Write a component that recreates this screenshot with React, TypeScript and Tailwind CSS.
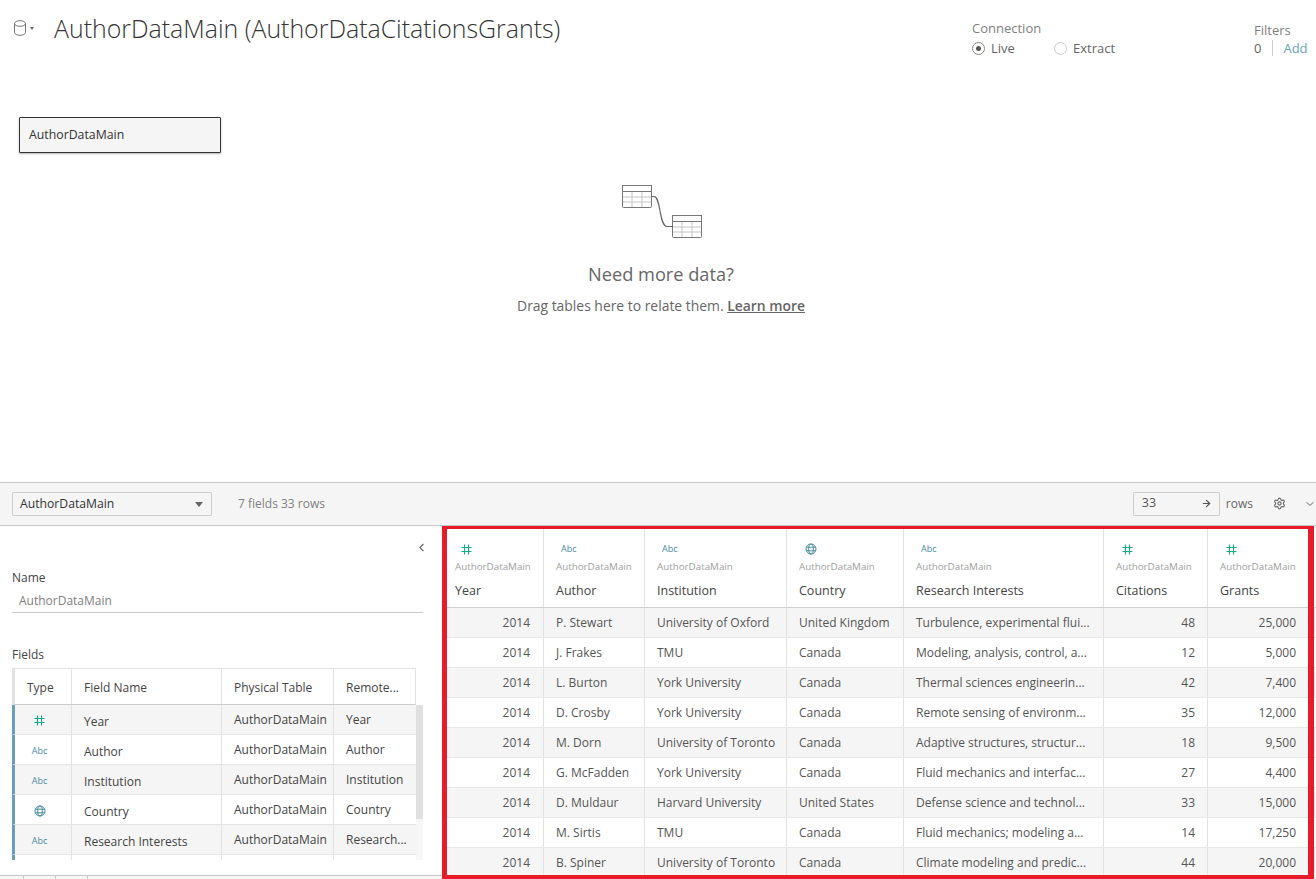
import { ArrowRight, ChevronDown, ChevronLeft, Settings } from "lucide-react";

const font = "font-['Open_Sans','Liberation_Sans',sans-serif]";

type FieldType = "num" | "abc" | "geo";

const columns: { name: string; type: FieldType; width: string; right?: boolean }[] = [
  { name: "Year", type: "num", width: "w-[97px]", right: true },
  { name: "Author", type: "abc", width: "w-[101px]" },
  { name: "Institution", type: "abc", width: "w-[142px]" },
  { name: "Country", type: "geo", width: "w-[117px]" },
  { name: "Research Interests", type: "abc", width: "w-[200px]" },
  { name: "Citations", type: "num", width: "w-[104px]", right: true },
  { name: "Grants", type: "num", width: "w-[100px]", right: true },
];

const rows = [
  ["2014", "P. Stewart", "University of Oxford", "United Kingdom", "Turbulence, experimental flui...", "48", "25,000"],
  ["2014", "J. Frakes", "TMU", "Canada", "Modeling, analysis, control, a...", "12", "5,000"],
  ["2014", "L. Burton", "York University", "Canada", "Thermal sciences engineerin...", "42", "7,400"],
  ["2014", "D. Crosby", "York University", "Canada", "Remote sensing of environm...", "35", "12,000"],
  ["2014", "M. Dorn", "University of Toronto", "Canada", "Adaptive structures, structur...", "18", "9,500"],
  ["2014", "G. McFadden", "York University", "Canada", "Fluid mechanics and interfac...", "27", "4,400"],
  ["2014", "D. Muldaur", "Harvard University", "United States", "Defense science and technol...", "33", "15,000"],
  ["2014", "M. Sirtis", "TMU", "Canada", "Fluid mechanics; modeling a...", "14", "17,250"],
  ["2014", "B. Spiner", "University of Toronto", "Canada", "Climate modeling and predic...", "44", "20,000"],
];

const fields: { type: FieldType; name: string; remote: string }[] = [
  { type: "num", name: "Year", remote: "Year" },
  { type: "abc", name: "Author", remote: "Author" },
  { type: "abc", name: "Institution", remote: "Institution" },
  { type: "geo", name: "Country", remote: "Country" },
  { type: "abc", name: "Research Interests", remote: "Research..." },
];

function HashIcon() {
  return (
    <svg width="11" height="11" viewBox="0 0 11 11" fill="none" stroke="#12a98e" strokeWidth="1.1">
      <path d="M3.5 0.5v10M7.5 0.5v10M0.5 3.5h10M0.5 7.5h10" />
    </svg>
  );
}

function GlobeIcon() {
  return (
    <svg width="12" height="12" viewBox="0 0 12 12" fill="none" stroke="#4a8aa5" strokeWidth="1">
      <circle cx="6" cy="6" r="5" />
      <ellipse cx="6" cy="6" rx="2.3" ry="5" />
      <path d="M1.2 4.2h9.6M1.2 7.8h9.6" />
    </svg>
  );
}

function TypeIcon({ type }: { type: FieldType }) {
  if (type === "num") return <HashIcon />;
  if (type === "geo") return <GlobeIcon />;
  return <span className="text-[9px] leading-[12px] text-[#4a8aa5]">Abc</span>;
}

function TableGlyph() {
  return (
    <svg width="30" height="24" viewBox="0 0 30 24" fill="none">
      <rect x="0.5" y="0.5" width="29" height="22" rx="1" fill="#fff" stroke="#777" />
      <rect x="0.5" y="0.5" width="29" height="6" fill="#fff" stroke="#777" />
      <path d="M10 7v15M20 7v15M1 12h28M1 17h28" stroke="#c4c4c4" />
    </svg>
  );
}

function Header() {
  return (
    <div className="flex items-start justify-between">
      <div className="flex items-center pl-[14px] pt-[13px]">
        <svg width="12" height="16" viewBox="0 0 12 16" fill="none" stroke="#777" strokeWidth="1">
          <path d="M0.5 3.5v9c0 1.5 2.4 2.8 5.5 2.8s5.5-1.3 5.5-2.8v-9" />
          <ellipse cx="6" cy="3.5" rx="5.5" ry="2.8" />
        </svg>
        <div className="ml-[4px] h-0 w-0 border-x-[2px] border-t-[3px] border-x-transparent border-t-[#666]" />
        <h1 className="ml-[20px] text-[24.9px] leading-[30px] font-light text-[#333]">
          AuthorDataMain (AuthorDataCitationsGrants)
        </h1>
      </div>
      <div className="flex">
        <div className="w-[282px] pt-[20px] text-[13px] text-[#666]">
          <div className="leading-[17px] text-[#808080]">Connection</div>
          <div className="mt-[2px] flex items-center leading-[18px]">
            <span className="flex h-[13px] w-[13px] items-center justify-center rounded-full border border-[#888]">
              <span className="h-[5px] w-[5px] rounded-full bg-[#555]" />
            </span>
            <span className="ml-[6px] w-[63px]">Live</span>
            <span className="h-[13px] w-[13px] rounded-full border border-[#ccc]" />
            <span className="ml-[6px]">Extract</span>
          </div>
        </div>
        <div className="w-[62px] pt-[22px] text-[13px]">
          <div className="leading-[17px] text-[#808080]">Filters</div>
          <div className="flex items-center leading-[18px]">
            <span className="text-[#666]">0</span>
            <span className="ml-[11px] h-[16px] w-px bg-[#ccc]" />
            <span className="ml-[10px] text-[#6aa3b8]">Add</span>
          </div>
        </div>
      </div>
    </div>
  );
}

function Canvas() {
  return (
    <section className="h-[483px] border-b border-[#c8c8c8] bg-white">
      <Header />
      <div className="ml-[19px] mt-[60px] flex h-[36px] w-[202px] items-center rounded-[1px] border border-[#333] bg-[#f5f5f5] pl-[9px] text-[12.3px] font-medium text-[#333] shadow-[0_1px_2px_rgba(0,0,0,0.3)]">
        AuthorDataMain
      </div>
      <div className="mt-[32px] flex flex-col items-center pl-[6px]">
        <div className="relative ml-[2px] h-[54px] w-[80px]">
          <TableGlyph />
          <div className="absolute bottom-0 right-0 h-[24px]">
            <TableGlyph />
          </div>
          <svg className="absolute left-[29px] top-[11px]" width="24" height="32" viewBox="0 0 24 32" fill="none" stroke="#666" strokeWidth="1.2">
            <path d="M0 0.5h3c7 0 5 30 13 30h6" />
          </svg>
        </div>
        <div className="mt-[23px] text-[18.2px] leading-[24px] text-[#666]">Need more data?</div>
        <div className="mt-[10px] text-[13.9px] leading-[20px] text-[#666]">
          Drag tables here to relate them. <span className="font-semibold underline">Learn more</span>
        </div>
      </div>
    </section>
  );
}

function Toolbar() {
  return (
    <div className="flex h-[43px] items-center border-b border-[#c8c8c8] bg-[#f5f5f5] pb-px pl-[12px]">
      <div className="flex h-[24px] w-[200px] items-center justify-between rounded-[1px] border border-[#ccc] bg-[#f5f5f5] pl-[7px] pr-[8px] pt-px text-[12.2px] text-[#333]">
        AuthorDataMain
        <span className="h-0 w-0 border-x-[4px] border-t-[5px] border-x-transparent border-t-[#666]" />
      </div>
      <span className="ml-[26px] text-[12px] text-[#808080]">7 fields 33 rows</span>
      <div className="ml-auto flex items-center">
        <div className="flex h-[24px] w-[87px] items-center justify-between rounded-[1px] border border-[#ccc] pl-[8px] pr-[7px] text-[12.5px] text-[#555]">
          33
          <ArrowRight size={11} color="#555" strokeWidth={2.5} />
        </div>
        <span className="ml-[6px] text-[12px] text-[#666]">rows</span>
        <Settings size={13} color="#666" className="ml-[20px]" />
        <ChevronDown size={12} color="#555" className="ml-[18px]" strokeWidth={1.8} />
      </div>
    </div>
  );
}

function FieldsPanel() {
  return (
    <div className="relative w-[442px] shrink-0 bg-white pl-[12px]">
      <div className="absolute right-[14px] top-[15px]">
        <ChevronLeft size={13} color="#666" />
      </div>
      <div className="pt-[43px] text-[12px] leading-[17px] text-[#444]">Name</div>
      <div className="mt-[7px] h-[20px] w-[411px] border-b border-[#ccc] pl-[7px] text-[12px] leading-[16px] text-[#808080]">
        AuthorDataMain
      </div>
      <div className="mt-[33px] text-[12px] leading-[17px] text-[#444]">Fields</div>
      <div className="mt-[5px] flex h-[192px] w-[411px] items-start overflow-hidden">
        <div className="w-[404px] shrink-0 text-[12px] text-[#444]">
          <div className="flex h-[37px] border-y border-r border-[#e2e2e2] border-b-[#ccc] border-l-[3px] border-l-[#e2e2e2] leading-[37px]">
            <div className="w-[57px] border-r border-[#e2e2e2] pl-[12px]">Type</div>
            <div className="w-[150px] border-r border-[#e2e2e2] pl-[12px]">Field Name</div>
            <div className="w-[112px] border-r border-[#e2e2e2] pl-[12px]">Physical Table</div>
            <div className="pl-[12px]">Remote...</div>
          </div>
          {fields.map((f, i) => (
            <div key={f.name} className={`flex h-[30px] border-b border-[#e4e4e4] border-l-[3px] border-l-[#6a9fb8] ${i % 2 === 0 ? "bg-[#f5f5f5]" : "bg-white"}`}>
              <div className="flex w-[57px] items-center justify-center border-r border-[#e2e2e2] pr-[7px] pt-[2px]">
                <TypeIcon type={f.type} />
              </div>
              <div className="flex w-[150px] items-center border-r border-[#e2e2e2] pl-[12px] pt-[5px]">{f.name}</div>
              <div className="flex w-[112px] items-center border-r border-[#e2e2e2] pl-[12px]">AuthorDataMain</div>
              <div className="flex items-center pl-[12px]">{f.remote}</div>
            </div>
          ))}
          <div className="flex h-[10px] border-l-[3px] border-l-[#6a9fb8]">
            <div className="w-[57px] border-r border-[#e2e2e2]" />
            <div className="w-[150px] border-r border-[#e2e2e2]" />
            <div className="w-[112px] border-r border-[#e2e2e2]" />
          </div>
        </div>
        <div className="mt-[37px] h-[155px] w-[7px] bg-[#f7f7f7]">
          <div className="h-[114px] bg-[#e0e0e0]" />
        </div>
      </div>
      <div className="absolute bottom-0 left-0 flex h-[4px] w-full border-t border-[#c8c8c8] bg-[#f5f5f5]">
        <div className="w-[24px] border-r border-[#c8c8c8]" />
        <div className="w-[32px] border-r border-[#c8c8c8]" />
        <div className="w-[32px] border-r border-[#c8c8c8]" />
      </div>
    </div>
  );
}

function DataGrid() {
  return (
    <div className="relative flex-1 overflow-hidden bg-white pl-[5px] pt-[3px]">
      <div className="flex h-[79px] border-b border-[#d0d0d0]">
        {columns.map((c, j) => (
          <div key={c.name} className={`${c.width} shrink-0 border-r border-[#e2e2e2] last:border-r-0 ${j === 0 ? "pl-[8px]" : "pl-[12px]"}`}>
            <div className={`mt-[13px] flex h-[14px] items-center ${c.type === "abc" ? "pl-[5px]" : "pl-[6px]"}`}>
              <TypeIcon type={c.type} />
            </div>
            <div className="mt-[4px] text-[9.8px] leading-[14px] text-[#a0a0a0]">AuthorDataMain</div>
            <div className="mt-[8px] text-[12.5px] leading-[18px] font-medium text-[#444]">{c.name}</div>
          </div>
        ))}
      </div>
      {rows.map((row, i) => (
        <div key={row[1]} className={`flex h-[30px] border-b border-[#e8e8e8] text-[12px] text-[#555] ${i % 2 === 0 ? "bg-[#f5f5f5]" : "bg-white"}`}>
          {row.map((cell, j) => (
            <div
              key={j}
              className={`${columns[j].width} flex shrink-0 items-center whitespace-nowrap border-r border-[#e2e2e2] last:border-r-0 ${columns[j].right ? (j === 0 ? "justify-end pr-[13px]" : "justify-end pr-[12px]") : "pl-[12px]"}`}
            >
              {cell}
            </div>
          ))}
        </div>
      ))}
      {/* red annotation box */}
      <div className="pointer-events-none absolute bottom-0 left-0 right-[2px] top-[-2px] border-b-[4px] border-l-[5px] border-r-[6px] border-t-[5px] border-[#e61c2a]" />
    </div>
  );
}

export default function App() {
  return (
    <div className={`${font} h-[879px] w-[1316px] overflow-hidden bg-white`}>
      <Canvas />
      <Toolbar />
      <div className="flex h-[353px]">
        <FieldsPanel />
        <DataGrid />
      </div>
    </div>
  );
}
